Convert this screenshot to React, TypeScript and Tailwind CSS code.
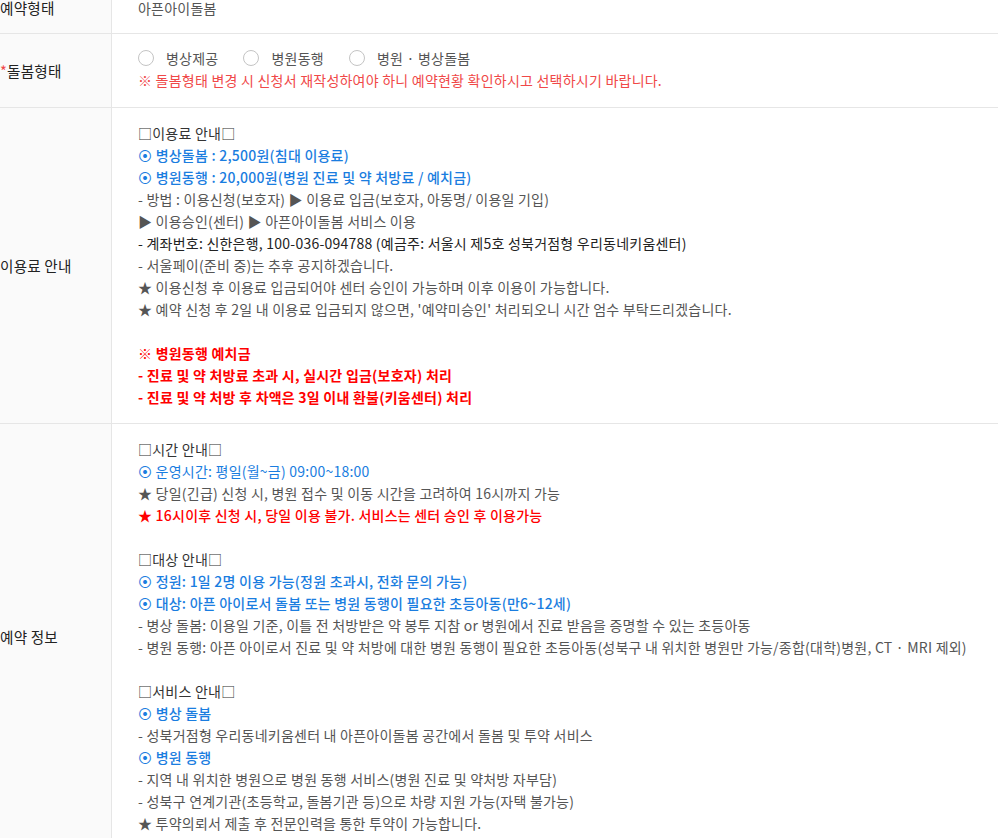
import React from "react";

const Dot = () => <span className="font-['DejaVu_Sans',sans-serif] leading-none">⦿</span>;

function Blue({ children, bold = true }: { children: React.ReactNode; bold?: boolean }) {
  return (
    <p className={`text-[#1a7de0] ${bold ? "font-medium" : ""}`}>
      <Dot /> {children}
    </p>
  );
}

function Gray({ children }: { children: React.ReactNode }) {
  return <p className="text-[#555]">{children}</p>;
}

function Head({ children }: { children: React.ReactNode }) {
  return <p className="text-[#333]">{children}</p>;
}

function Red({ children }: { children: React.ReactNode }) {
  return <p className="text-[#ff0000] font-semibold">{children}</p>;
}

const Blank = () => <p>&nbsp;</p>;

function Row({ label, children, valueClass }: { label: React.ReactNode; children: React.ReactNode; valueClass: string }) {
  return (
    <div className="grid grid-cols-[112px_1fr] border-b border-[#e6e6e6]">
      <div className="bg-[#fafafa] border-r border-[#e6e6e6] flex items-center text-[14.6px] tracking-[0.2px] text-[#222]">{label}</div>
      <div className={`pl-[26px] ${valueClass}`}>{children}</div>
    </div>
  );
}

function Radio({ label }: { label: string }) {
  return (
    <label className="flex items-center gap-[12px] text-[#555]">
      <span className="w-[16px] h-[16px] rounded-full border border-[#c4c4c4] bg-white" />
      <span>{label}</span>
    </label>
  );
}

export default function App() {
  return (
    <div className="w-[998px] h-[838px] overflow-hidden bg-white font-['Noto_Sans_CJK_KR','Noto_Sans',sans-serif] text-[14px] leading-[22px] tracking-[0.23px]">
      <div className="-mt-[3px]">
        <Row label={<span className="pb-[14px]">예약형태</span>} valueClass="pt-0 pb-[14px] text-[#555]">
          아픈아이돌봄
        </Row>
        <Row
          label={
            <span>
              <span className="text-[#f04848]">*</span>돌봄형태
            </span>
          }
          valueClass="pt-[12px] pb-[16px]"
        >
          <div className="flex items-center gap-[25px] h-[23px]">
            <Radio label="병상제공" />
            <Radio label="병원동행" />
            <Radio label="병원 · 병상돌봄" />
          </div>
          <p className="text-[#f04848]">※ 돌봄형태 변경 시 신청서 재작성하여야 하니 예약현황 확인하시고 선택하시기 바랍니다.</p>
        </Row>
        <Row label="이용료 안내" valueClass="pt-[14px] pb-[15px]">
          <Head>□이용료 안내□</Head>
          <Blue>병상돌봄 : 2,500원(침대 이용료)</Blue>
          <Blue>병원동행 : 20,000원(병원 진료 및 약 처방료 / 예치금)</Blue>
          <Gray>- 방법 : 이용신청(보호자) ▶ 이용료 입금(보호자, 아동명/ 이용일 기입)</Gray>
          <Gray>▶ 이용승인(센터) ▶ 아픈아이돌봄 서비스 이용</Gray>
          <p className="text-[#222]">- 계좌번호: 신한은행, 100-036-094788 (예금주: 서울시 제5호 성북거점형 우리동네키움센터)</p>
          <Gray>- 서울페이(준비 중)는 추후 공지하겠습니다.</Gray>
          <Gray>★ 이용신청 후 이용료 입금되어야 센터 승인이 가능하며 이후 이용이 가능합니다.</Gray>
          <Gray>★ 예약 신청 후 2일 내 이용료 입금되지 않으면, '예약미승인' 처리되오니 시간 엄수 부탁드리겠습니다.</Gray>
          <Blank />
          <Red>※ 병원동행 예치금</Red>
          <Red>- 진료 및 약 처방료 초과 시, 실시간 입금(보호자) 처리</Red>
          <Red>- 진료 및 약 처방 후 차액은 3일 이내 환불(키움센터) 처리</Red>
        </Row>
        <Row label="예약 정보" valueClass="pt-[14px] pb-[15px]">
          <Head>□시간 안내□</Head>
          <Blue bold={false}>운영시간: 평일(월~금) 09:00~18:00</Blue>
          <Gray>★ 당일(긴급) 신청 시, 병원 접수 및 이동 시간을 고려하여 16시까지 가능</Gray>
          <p className="text-[#ff0000] font-medium">★ 16시이후 신청 시, 당일 이용 불가. 서비스는 센터 승인 후 이용가능</p>
          <Blank />
          <Head>□대상 안내□</Head>
          <Blue>정원: 1일 2명 이용 가능(정원 초과시, 전화 문의 가능)</Blue>
          <Blue>대상: 아픈 아이로서 돌봄 또는 병원 동행이 필요한 초등아동(만6~12세)</Blue>
          <Gray>- 병상 돌봄: 이용일 기준, 이틀 전 처방받은 약 봉투 지참 or 병원에서 진료 받음을 증명할 수 있는 초등아동</Gray>
          <Gray>- 병원 동행: 아픈 아이로서 진료 및 약 처방에 대한 병원 동행이 필요한 초등아동(성북구 내 위치한 병원만 가능/종합(대학)병원, CT · MRI 제외)</Gray>
          <Blank />
          <Head>□서비스 안내□</Head>
          <Blue>병상 돌봄</Blue>
          <Gray>- 성북거점형 우리동네키움센터 내 아픈아이돌봄 공간에서 돌봄 및 투약 서비스</Gray>
          <Blue>병원 동행</Blue>
          <Gray>- 지역 내 위치한 병원으로 병원 동행 서비스(병원 진료 및 약처방 자부담)</Gray>
          <Gray>- 성북구 연계기관(초등학교, 돌봄기관 등)으로 차량 지원 가능(자택 불가능)</Gray>
          <Gray>★ 투약의뢰서 제출 후 전문인력을 통한 투약이 가능합니다.</Gray>
        </Row>
      </div>
    </div>
  );
}
